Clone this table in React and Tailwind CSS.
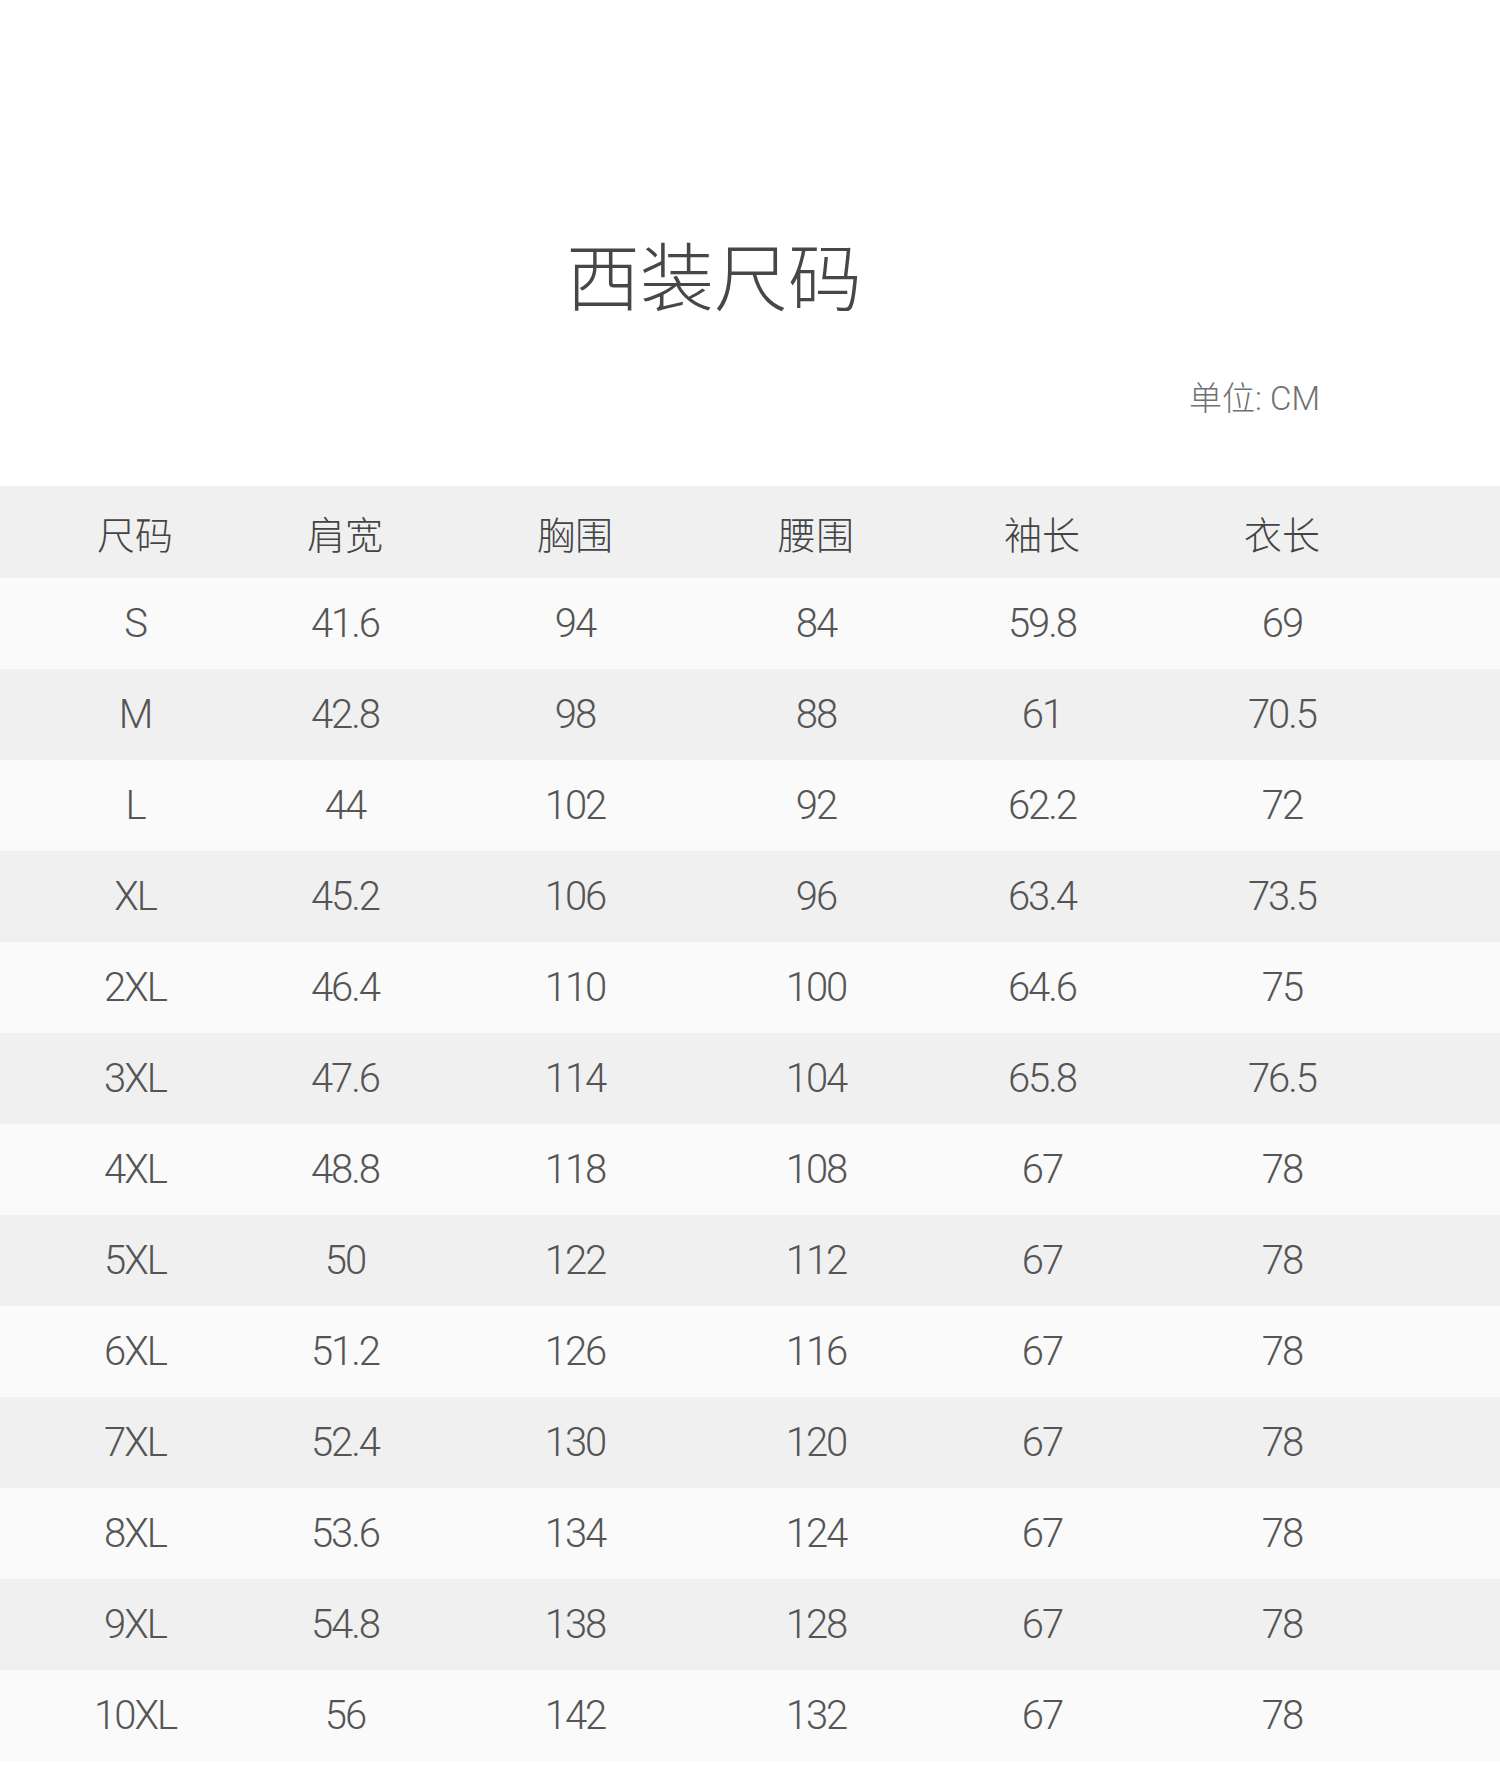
const headers = ['尺码', '肩宽', '胸围', '腰围', '袖长', '衣长'];

const rows = [
  ['S', '41.6', '94', '84', '59.8', '69'],
  ['M', '42.8', '98', '88', '61', '70.5'],
  ['L', '44', '102', '92', '62.2', '72'],
  ['XL', '45.2', '106', '96', '63.4', '73.5'],
  ['2XL', '46.4', '110', '100', '64.6', '75'],
  ['3XL', '47.6', '114', '104', '65.8', '76.5'],
  ['4XL', '48.8', '118', '108', '67', '78'],
  ['5XL', '50', '122', '112', '67', '78'],
  ['6XL', '51.2', '126', '116', '67', '78'],
  ['7XL', '52.4', '130', '120', '67', '78'],
  ['8XL', '53.6', '134', '124', '67', '78'],
  ['9XL', '54.8', '138', '128', '67', '78'],
  ['10XL', '56', '142', '132', '67', '78'],
];

const cjk = "font-['Noto_Sans_CJK_SC',sans-serif]";
const num = "font-['Roboto','Noto_Sans_CJK_SC',sans-serif]";
const cols = 'grid grid-cols-[212px_208px_252px_230px_222px_258px] pl-[29px] items-center';

export default function App() {
  return (
    <div className="w-[1500px] min-h-[1787px] bg-white">
      <div className="pt-[229px]">
        <h1 className={`w-[1428px] h-[88px] leading-[88px] text-center text-[74px] font-light text-[#474747] ${cjk}`}>
          西装尺码
        </h1>
        <div className={`mt-[62px] h-[40px] leading-[40px] pr-[180px] text-right text-[33px] font-light text-[#707070] ${num}`}>
          单位: CM
        </div>
      </div>

      <div className="mt-[67px]">
        <div className={`${cols} h-[92px] bg-[#f0f0f0] text-[38px] text-[#444] font-light ${cjk}`}>
          {headers.map((h) => (
            <div key={h} className="text-center">{h}</div>
          ))}
        </div>
        {rows.map((r, i) => (
          <div
            key={r[0]}
            className={`${cols} h-[91px] ${i % 2 === 0 ? 'bg-[#fafafa]' : 'bg-[#f0f0f0]'} text-[40px] font-light tracking-[-2px] text-[#555] ${num}`}
          >
            {r.map((v, j) => (
              <div key={j} className="text-center">{v}</div>
            ))}
          </div>
        ))}
      </div>
    </div>
  );
}
